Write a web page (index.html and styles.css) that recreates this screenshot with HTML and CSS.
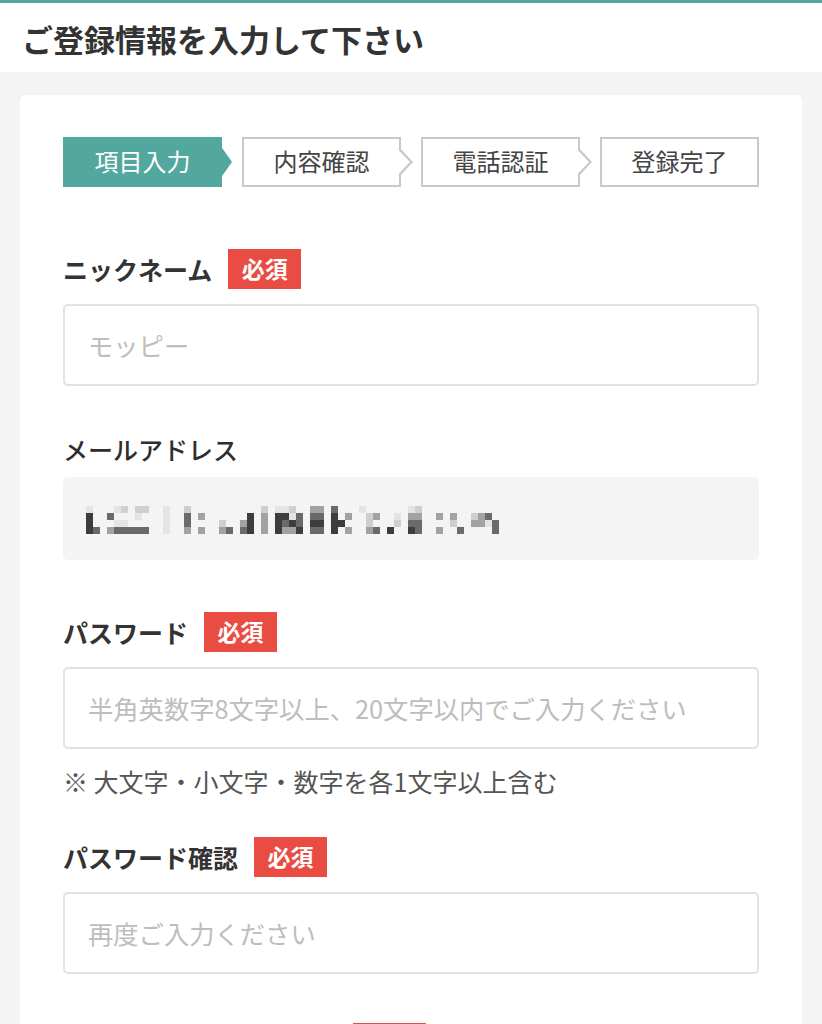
FILE: index.html
```html
<!DOCTYPE html>
<html lang="ja">
<head>
<meta charset="utf-8">
<title>ご登録情報を入力して下さい</title>
<link rel="stylesheet" href="styles.css">
</head>
<body>
<header class="page-header">
  <h1 class="page-title">ご登録情報を入力して下さい</h1>
</header>
<main class="page-main">
  <section class="card">
    <ol class="steps">
      <li class="step step-active">項目入力</li>
      <li class="step step-arrow">内容確認</li>
      <li class="step step-arrow">電話認証</li>
      <li class="step">登録完了</li>
    </ol>

    <div class="field field-nickname">
      <div class="label-row">
        <span class="label">ニックネーム</span>
        <span class="badge">必須</span>
      </div>
      <input class="text-input" type="text" placeholder="モッピー">
    </div>

    <div class="field field-email">
      <div class="label-row label-row-plain">
        <span class="label label-medium">メールアドレス</span>
      </div>
      <div class="readonly-box">
        <svg class="mosaic" width="413" height="28" viewBox="0 0 413 28" aria-hidden="true">
          <defs>
            <filter id="soft" x="-5%" y="-20%" width="110%" height="140%">
              <feGaussianBlur stdDeviation="0.7"/>
            </filter>
          </defs>
          <g filter="url(#soft)">
          <rect x="0" y="0" width="7" height="7" fill="#e4e4e4"/>
          <rect x="0" y="7" width="7" height="21" fill="#3c3c3c"/>
          <rect x="7" y="21" width="7" height="7" fill="#6a6a6a"/>
          <rect x="21" y="7" width="7" height="7" fill="#6a6a6a"/>
          <rect x="21" y="21" width="7" height="7" fill="#a2a2a2"/>
          <rect x="28" y="0" width="7" height="7" fill="#e4e4e4"/>
          <rect x="28" y="14" width="14" height="7" fill="#e4e4e4"/>
          <rect x="35" y="0" width="7" height="7" fill="#cfcfcf"/>
          <rect x="28" y="21" width="35" height="7" fill="#6a6a6a"/>
          <rect x="49" y="0" width="14" height="7" fill="#cfcfcf"/>
          <rect x="49" y="7" width="7" height="7" fill="#e4e4e4"/>
          <rect x="77" y="0" width="7" height="28" fill="#e4e4e4"/>
          <rect x="98" y="0" width="7" height="7" fill="#cfcfcf"/>
          <rect x="98" y="7" width="7" height="14" fill="#6a6a6a"/>
          <rect x="98" y="21" width="7" height="7" fill="#a2a2a2"/>
          <rect x="112" y="7" width="7" height="7" fill="#a2a2a2"/>
          <rect x="112" y="21" width="7" height="7" fill="#a2a2a2"/>
          <rect x="133" y="14" width="7" height="7" fill="#cfcfcf"/>
          <rect x="133" y="21" width="7" height="7" fill="#a2a2a2"/>
          <rect x="140" y="21" width="7" height="7" fill="#6a6a6a"/>
          <rect x="154" y="14" width="7" height="7" fill="#a2a2a2"/>
          <rect x="154" y="21" width="7" height="7" fill="#6a6a6a"/>
          <rect x="161" y="7" width="7" height="21" fill="#3c3c3c"/>
          <rect x="175" y="0" width="7" height="7" fill="#cfcfcf"/>
          <rect x="175" y="7" width="7" height="21" fill="#a2a2a2"/>
          <rect x="189" y="0" width="7" height="7" fill="#e4e4e4"/>
          <rect x="189" y="7" width="7" height="21" fill="#3c3c3c"/>
          <rect x="196" y="0" width="7" height="7" fill="#e4e4e4"/>
          <rect x="196" y="7" width="7" height="7" fill="#3c3c3c"/>
          <rect x="196" y="14" width="7" height="7" fill="#6a6a6a"/>
          <rect x="196" y="21" width="7" height="7" fill="#a2a2a2"/>
          <rect x="203" y="0" width="7" height="7" fill="#cfcfcf"/>
          <rect x="203" y="7" width="7" height="7" fill="#e4e4e4"/>
          <rect x="203" y="14" width="7" height="7" fill="#3c3c3c"/>
          <rect x="203" y="21" width="7" height="7" fill="#a2a2a2"/>
          <rect x="210" y="7" width="7" height="14" fill="#6a6a6a"/>
          <rect x="210" y="21" width="7" height="7" fill="#3c3c3c"/>
          <rect x="224" y="0" width="14" height="7" fill="#a2a2a2"/>
          <rect x="224" y="7" width="14" height="7" fill="#6a6a6a"/>
          <rect x="224" y="14" width="14" height="7" fill="#3c3c3c"/>
          <rect x="224" y="21" width="14" height="7" fill="#6a6a6a"/>
          <rect x="245" y="0" width="7" height="7" fill="#6a6a6a"/>
          <rect x="245" y="7" width="7" height="21" fill="#3c3c3c"/>
          <rect x="252" y="14" width="7" height="7" fill="#3c3c3c"/>
          <rect x="259" y="7" width="7" height="7" fill="#a2a2a2"/>
          <rect x="259" y="21" width="7" height="7" fill="#a2a2a2"/>
          <rect x="273" y="0" width="7" height="7" fill="#e4e4e4"/>
          <rect x="280" y="7" width="7" height="14" fill="#cfcfcf"/>
          <rect x="280" y="21" width="7" height="7" fill="#a2a2a2"/>
          <rect x="287" y="7" width="7" height="7" fill="#a2a2a2"/>
          <rect x="287" y="21" width="7" height="7" fill="#6a6a6a"/>
          <rect x="301" y="21" width="7" height="7" fill="#3c3c3c"/>
          <rect x="308" y="7" width="7" height="7" fill="#e4e4e4"/>
          <rect x="308" y="14" width="7" height="7" fill="#cfcfcf"/>
          <rect x="322" y="0" width="7" height="7" fill="#e4e4e4"/>
          <rect x="322" y="7" width="7" height="7" fill="#a2a2a2"/>
          <rect x="322" y="14" width="7" height="7" fill="#6a6a6a"/>
          <rect x="322" y="21" width="7" height="7" fill="#3c3c3c"/>
          <rect x="329" y="0" width="7" height="7" fill="#cfcfcf"/>
          <rect x="329" y="7" width="7" height="7" fill="#a2a2a2"/>
          <rect x="329" y="14" width="7" height="14" fill="#6a6a6a"/>
          <rect x="350" y="7" width="7" height="7" fill="#a2a2a2"/>
          <rect x="350" y="21" width="7" height="7" fill="#a2a2a2"/>
          <rect x="364" y="7" width="7" height="7" fill="#a2a2a2"/>
          <rect x="364" y="14" width="7" height="7" fill="#cfcfcf"/>
          <rect x="371" y="21" width="7" height="7" fill="#6a6a6a"/>
          <rect x="385" y="7" width="7" height="7" fill="#cfcfcf"/>
          <rect x="385" y="14" width="14" height="7" fill="#a2a2a2"/>
          <rect x="392" y="7" width="7" height="7" fill="#a2a2a2"/>
          <rect x="399" y="7" width="7" height="7" fill="#6a6a6a"/>
          <rect x="399" y="14" width="7" height="7" fill="#e4e4e4"/>
          <rect x="406" y="14" width="7" height="14" fill="#6a6a6a"/>
          </g>
        </svg>
      </div>
    </div>

    <div class="field field-password">
      <div class="label-row">
        <span class="label">パスワード</span>
        <span class="badge">必須</span>
      </div>
      <input class="text-input" type="password" placeholder="半角英数字8文字以上、20文字以内でご入力ください">
      <p class="hint">※ 大文字・小文字・数字を各1文字以上含む</p>
    </div>

    <div class="field field-confirm">
      <div class="label-row">
        <span class="label">パスワード確認</span>
        <span class="badge">必須</span>
      </div>
      <input class="text-input" type="password" placeholder="再度ご入力ください">
    </div>

    <div class="field field-next">
      <div class="label-row label-row-offset">
        <span class="badge badge-empty"></span>
      </div>
    </div>
  </section>
</main>
</body>
</html>
```

FILE: styles.css
```css
* {
  box-sizing: border-box;
}

html, body {
  margin: 0;
  padding: 0;
}

body {
  background: #f4f4f4;
  font-family: "Noto Sans CJK JP", "Noto Sans", sans-serif;
  color: #333;
}

.page-header {
  background: #fff;
  border-top: 3px solid #52a89e;
  height: 72px;
  display: flex;
  align-items: center;
  padding: 2px 0 0 22px;
}

.page-title {
  margin: 0;
  font-size: 31px;
  font-weight: 700;
  color: #333;
  line-height: 1.2;
}

.page-main {
  padding: 23px 20px 0;
}

.card {
  background: #fff;
  border-radius: 6px;
  padding: 42px 43px 60px;
}

.steps {
  list-style: none;
  margin: 0;
  padding: 0;
  display: flex;
  gap: 20px;
}

.step {
  position: relative;
  flex: 1;
  height: 50px;
  border: 2px solid #c9c9c9;
  background: #fff;
  display: flex;
  align-items: center;
  justify-content: center;
  font-size: 24px;
  color: #444;
  line-height: 1;
  padding-bottom: 2px;
}

.step-active {
  background: #52a89e;
  border-color: #52a89e;
  color: #fff;
}

.step-active::after {
  content: "";
  position: absolute;
  left: 100%;
  top: calc(50% - 17px);
  width: 12px;
  height: 34px;
  background: #52a89e;
  clip-path: polygon(0 0, 100% 50%, 0 100%);
}

.step-arrow::before {
  content: "";
  position: absolute;
  left: 100%;
  top: calc(50% - 15px);
  width: 14px;
  height: 30px;
  background: #c9c9c9;
  clip-path: polygon(0 0, 100% 50%, 0 100%);
  z-index: 1;
}

.step-arrow::after {
  content: "";
  position: absolute;
  left: calc(100% - 1px);
  top: calc(50% - 12.5px);
  width: 12px;
  height: 25px;
  background: #fff;
  clip-path: polygon(0 0, 100% 50%, 0 100%);
  z-index: 2;
}

.field-nickname { margin-top: 62px; }
.field-email { margin-top: 43px; }
.field-password { margin-top: 52px; }
.field-confirm { margin-top: 40px; }
.field-next { margin-top: 49px; }

.label-row {
  display: flex;
  align-items: center;
  gap: 16px;
  height: 40px;
  margin-bottom: 15px;
}

.label-row-plain {
  margin-bottom: 8px;
}

.label-row-offset {
  padding-left: 290px;
}

.label {
  font-size: 25px;
  font-weight: 700;
  color: #333;
  line-height: 1;
}

.label-medium {
  font-weight: 500;
  color: #2e2e2e;
}

.badge {
  display: inline-flex;
  align-items: center;
  justify-content: center;
  width: 73px;
  height: 40px;
  background: #e94c43;
  color: #fff;
  font-size: 23px;
  font-weight: 700;
  line-height: 1;
  padding-bottom: 2px;
}

.text-input {
  display: block;
  width: 100%;
  height: 82px;
  border: 2px solid #e2e2e2;
  border-radius: 5px;
  padding: 0 23px;
  font-family: "Noto Sans CJK JP", "Noto Sans", sans-serif;
  font-size: 25.3px;
  color: #333;
  background: #fff;
  outline: none;
}

.text-input::placeholder {
  color: #bdbdbd;
}

.readonly-box {
  height: 83px;
  background: #f4f4f4;
  border-radius: 5px;
  display: flex;
  align-items: center;
  padding: 0 23px;
}

.mosaic {
  display: block;
  margin-top: 2px;
}

.hint {
  margin: 16px 0 0;
  font-size: 25px;
  line-height: 32px;
  color: #555;
}
```
